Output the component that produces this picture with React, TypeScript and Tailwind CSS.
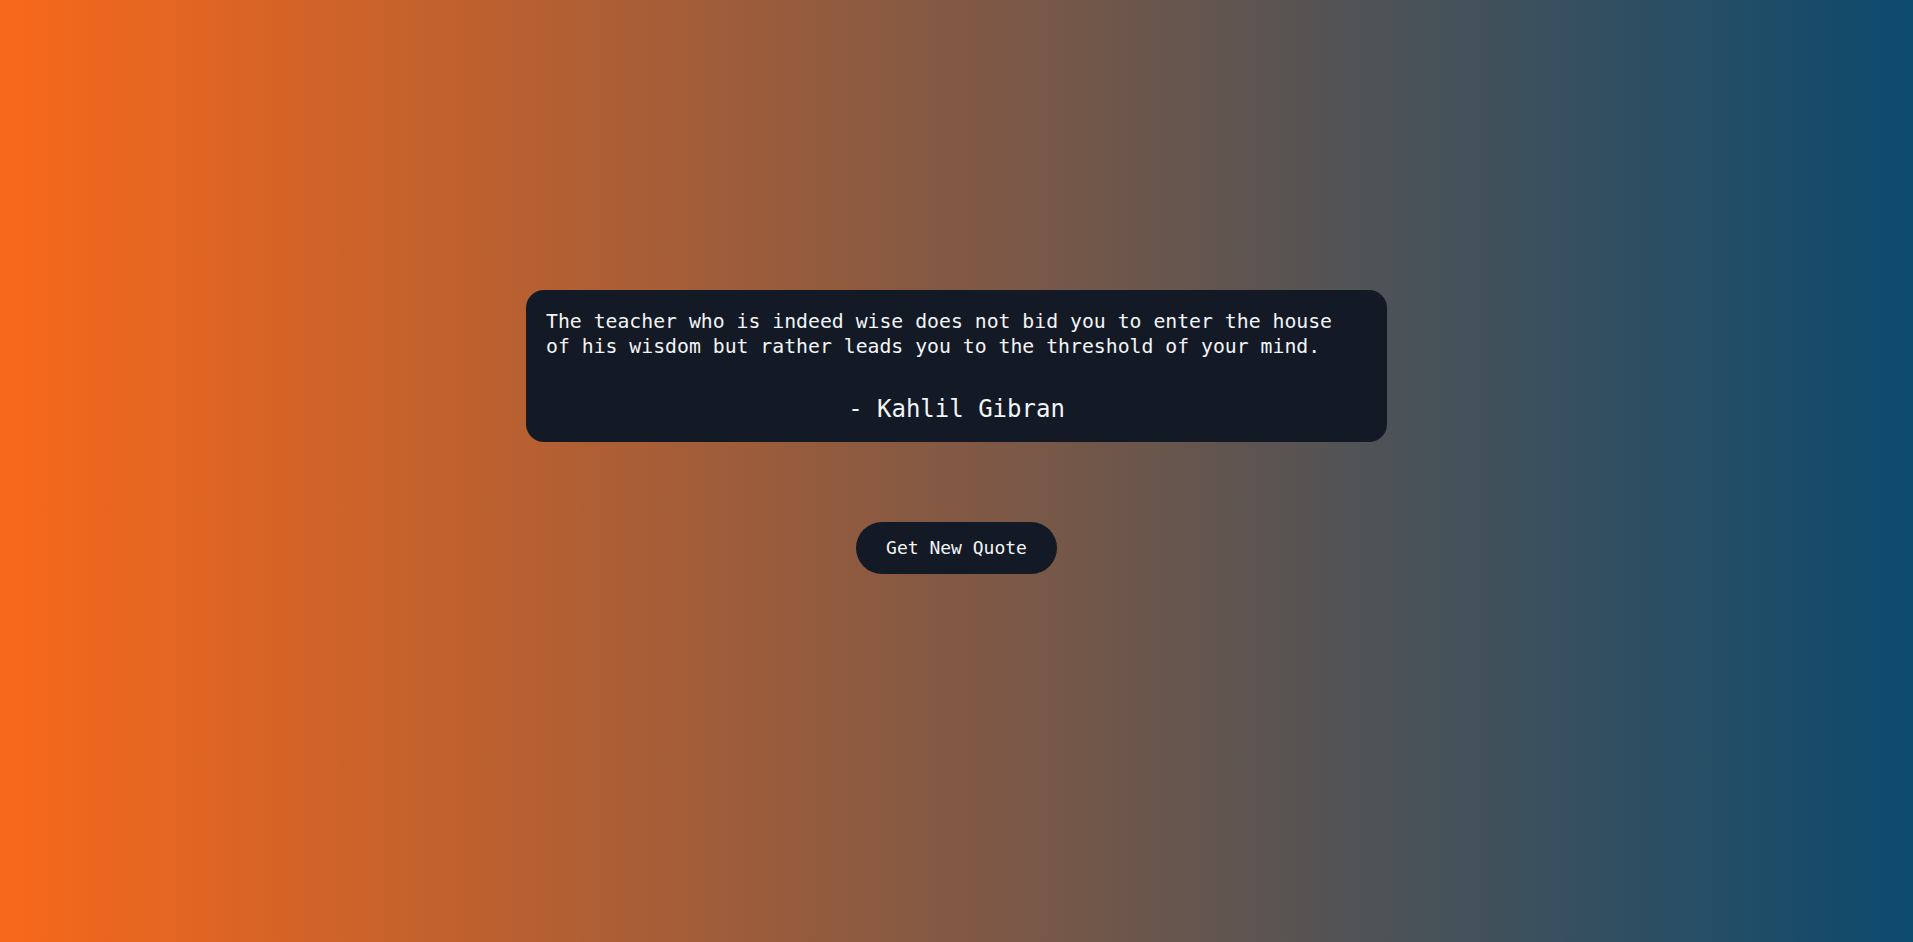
export default function App() {
  return (
    <main className="min-h-screen w-full flex flex-col items-center justify-center pb-[78px] bg-[linear-gradient(to_right,#f8681a,#0c4a6e)] font-['DejaVu_Sans_Mono',monospace] text-[#f3f4f6]">
      <section className="w-[861px] rounded-[18px] bg-[#131a26] px-5 pt-[19px] pb-[17px]">
        <p className="text-[19.8px] leading-[25px]">
          The teacher who is indeed wise does not bid you to enter the house of his wisdom but rather leads you to the threshold of your mind.
        </p>
        <p className="mt-[34px] text-center text-[24px] leading-[32px]">- Kahlil Gibran</p>
      </section>
      <button className="mt-20 rounded-full bg-[#131a26] px-[30px] py-3 text-[18px] leading-[28px]">
        Get New Quote
      </button>
    </main>
  );
}
